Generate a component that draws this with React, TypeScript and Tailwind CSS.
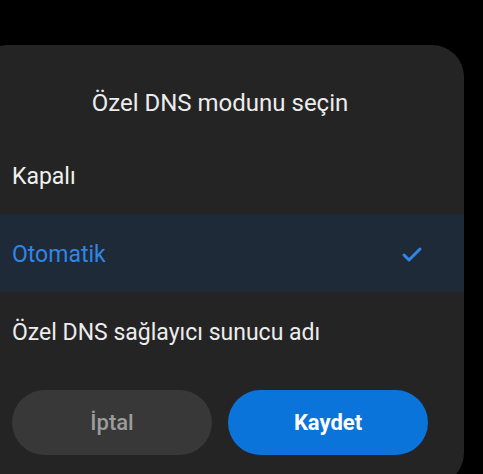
import { Check } from "lucide-react"

export default function App() {
    return (
        <main className="bg-black w-[483px] h-[474px] overflow-hidden pt-[45px]" style={{ fontFamily: "Roboto, 'Noto Sans', sans-serif" }}>
            <div className="ml-[-24px] w-[488px] h-[440px] bg-[#242424] rounded-[32px]">
                <div className="pt-[44px] pb-[19px] text-center text-[24px] leading-[28px] text-[#ececec]">
                    Özel DNS modunu seçin
                </div>
                <div className="h-[78px] flex items-center pt-[4px] px-[36px] text-[23px] text-[#f0f0f0]">
                    Kapalı
                </div>
                <div className="h-[78px] flex items-center justify-between pt-[4px] pl-[36px] pr-[40px] bg-[#1f2a38] text-[23px] text-[#2f86e6]">
                    <span>Otomatik</span>
                    <Check className="w-[24px] h-[24px] text-[#2f86e6]" strokeWidth={3} />
                </div>
                <div className="h-[78px] flex items-center pt-[4px] px-[36px] text-[23px] text-[#ececec]">
                    Özel DNS sağlayıcı sunucu adı
                </div>
                <div className="mt-[20px] px-[36px] grid grid-cols-2 gap-4">
                    <button className="h-[65px] rounded-full bg-[#383838] text-[22px] font-medium text-[#9c9c9c]">İptal</button>
                    <button className="h-[65px] rounded-full bg-[#0a74da] text-[22px] font-bold text-white">Kaydet</button>
                </div>
            </div>
        </main>
    )
}
